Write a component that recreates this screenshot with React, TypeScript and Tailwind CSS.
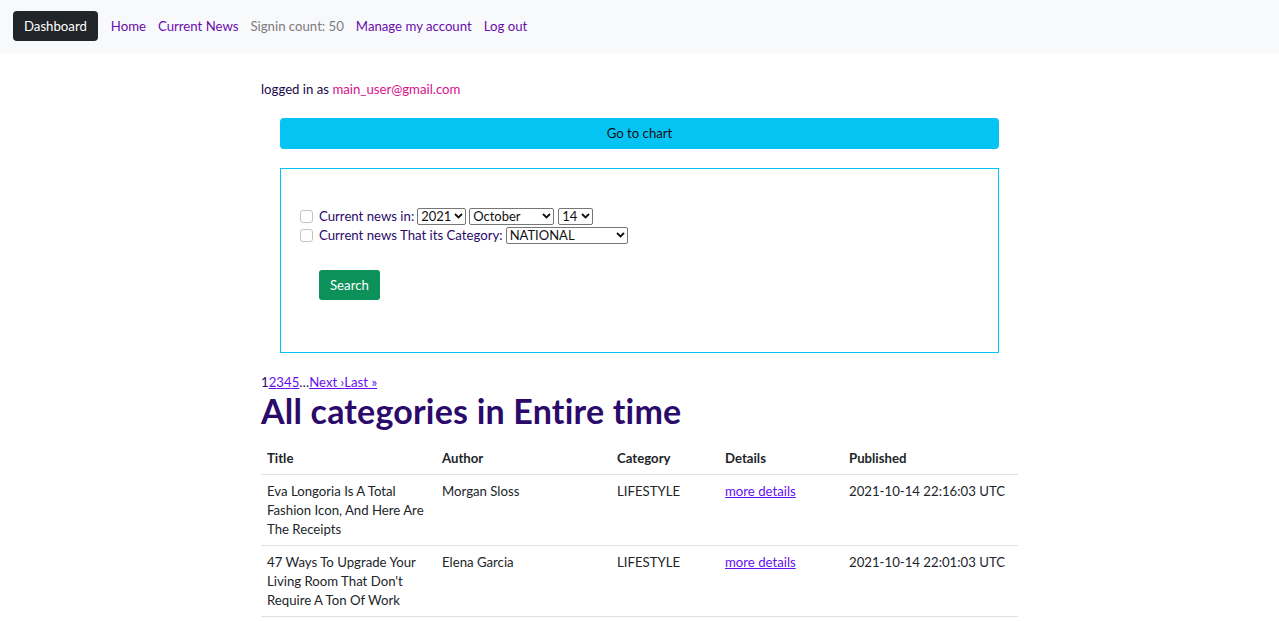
import React from 'react';

const rows = [
  {
    title: 'Eva Longoria Is A Total Fashion Icon, And Here Are The Receipts',
    author: 'Morgan Sloss',
    category: 'LIFESTYLE',
    published: '2021-10-14 22:16:03 UTC',
  },
  {
    title: "47 Ways To Upgrade Your Living Room That Don't Require A Ton Of Work",
    author: 'Elena Garcia',
    category: 'LIFESTYLE',
    published: '2021-10-14 22:01:03 UTC',
  },
];

const Select: React.FC<{ value: string; options: string[]; className: string }> = ({ value, options, className }) => (
  <span className={`relative inline-flex ${className}`}>
    <select
      defaultValue={value}
      className="appearance-none w-full h-[17px] py-0 pl-[3px] pr-[12px] border border-[#767676] rounded-[2px] bg-white text-[13px] leading-[15px] text-[#111]"
    >
      {options.map((o) => (
        <option key={o}>{o}</option>
      ))}
    </select>
    {/* chevron */}
    <svg className="pointer-events-none absolute right-[3px] top-[5px]" width="9" height="6" viewBox="0 0 9 6">
      <path d="M1 1l3.5 3.5L8 1" fill="none" stroke="#111" strokeWidth="1.8" />
    </svg>
  </span>
);

const Check: React.FC = () => <span className="inline-block w-[13px] h-[13px] border border-[#c4c4c4] rounded-[3px] bg-white mr-[6px]" />;

export default function App() {
  return (
    <div className="min-h-screen bg-white text-[13.2px] leading-[19px] text-[#2b0a6b]" style={{ fontFamily: 'Lato, "Open Sans", sans-serif' }}>
      {/* Navbar */}
      <nav className="h-[54px] bg-[#f8f9fa] flex items-center pl-[13px] pb-[2px]">
        <a className="bg-[#212529] text-white rounded-[4px] h-[30px] px-[11px] flex items-center mr-[7px]">Dashboard</a>
        <ul className="flex items-center">
          <li className="px-[6px] text-[#6a0dad]">Home</li>
          <li className="px-[6px] text-[#6a0dad]">Current News</li>
          <li className="px-[6px] text-[#7d7a80]">Signin count: 50</li>
          <li className="px-[6px] text-[#6a0dad]">Manage my account</li>
          <li className="px-[6px] text-[#6a0dad]">Log out</li>
        </ul>
      </nav>

      <main className="w-[757px] mx-auto pt-[26px]">
        <p className="text-[#1c0a4d]">
          logged in as <span className="text-[#d6128b]">main_user@gmail.com</span>
        </p>

        <div className="px-[19px] mt-[19px]">
          <button className="w-full h-[31px] bg-[#05c4f3] rounded-[4px] text-[#111]">Go to chart</button>

          <div className="mt-[19px] border border-[#05c4f3] h-[185px] pt-[38px] pl-[19px]">
            <div className="flex items-center h-[19px]">
              <Check />
              <span>Current news in:</span>
              <Select value="2021" options={['2021']} className="w-[49px] ml-[3px]" />
              <Select value="October" options={['October']} className="w-[85px] ml-[3px]" />
              <Select value="14" options={['14']} className="w-[35px] ml-[4px]" />
            </div>
            <div className="flex items-center h-[19px]">
              <Check />
              <span>Current news That its Category:</span>
              <Select value="NATIONAL" options={['NATIONAL']} className="w-[122px] ml-[3px]" />
            </div>
            <button className="mt-[25px] ml-[19px] h-[30px] px-[11px] rounded-[3px] bg-[#0b9159] text-white">Search</button>
          </div>
        </div>

        <div className="mt-[20px]">
          <span>1</span>
          <a className="text-[#6610f2] underline">2</a>
          <a className="text-[#6610f2] underline">3</a>
          <a className="text-[#6610f2] underline">4</a>
          <a className="text-[#6610f2] underline">5</a>
          <span>…</span>
          <a className="text-[#6610f2] underline">Next ›</a>
          <a className="text-[#6610f2] underline">Last »</a>
        </div>
        <h1 className="text-[34px] leading-[38px] font-bold text-[#2b0a6b] mb-[13px] tracking-[0.2px]">All categories in Entire time</h1>

        <table className="w-full text-left text-[#212529] border-collapse">
          <thead>
            <tr className="border-b border-[#dee2e6]">
              <th className="w-[175px] px-[6px] py-[6px] font-bold">Title</th>
              <th className="w-[175px] px-[6px] py-[6px] font-bold">Author</th>
              <th className="w-[108px] px-[6px] py-[6px] font-bold">Category</th>
              <th className="w-[124px] px-[6px] py-[6px] font-bold">Details</th>
              <th className="px-[6px] py-[6px] font-bold">Published</th>
            </tr>
          </thead>
          <tbody>
            {rows.map((r) => (
              <tr key={r.title} className="border-b border-[#dee2e6] align-top">
                <td className="px-[6px] pt-[7px] pb-[6px]">{r.title}</td>
                <td className="px-[6px] pt-[7px] pb-[6px]">{r.author}</td>
                <td className="px-[6px] pt-[7px] pb-[6px]">{r.category}</td>
                <td className="px-[6px] pt-[7px] pb-[6px]">
                  <a className="text-[#6610f2] underline">more details</a>
                </td>
                <td className="px-[6px] pt-[7px] pb-[6px]">{r.published}</td>
              </tr>
            ))}
          </tbody>
        </table>
      </main>
    </div>
  );
}
